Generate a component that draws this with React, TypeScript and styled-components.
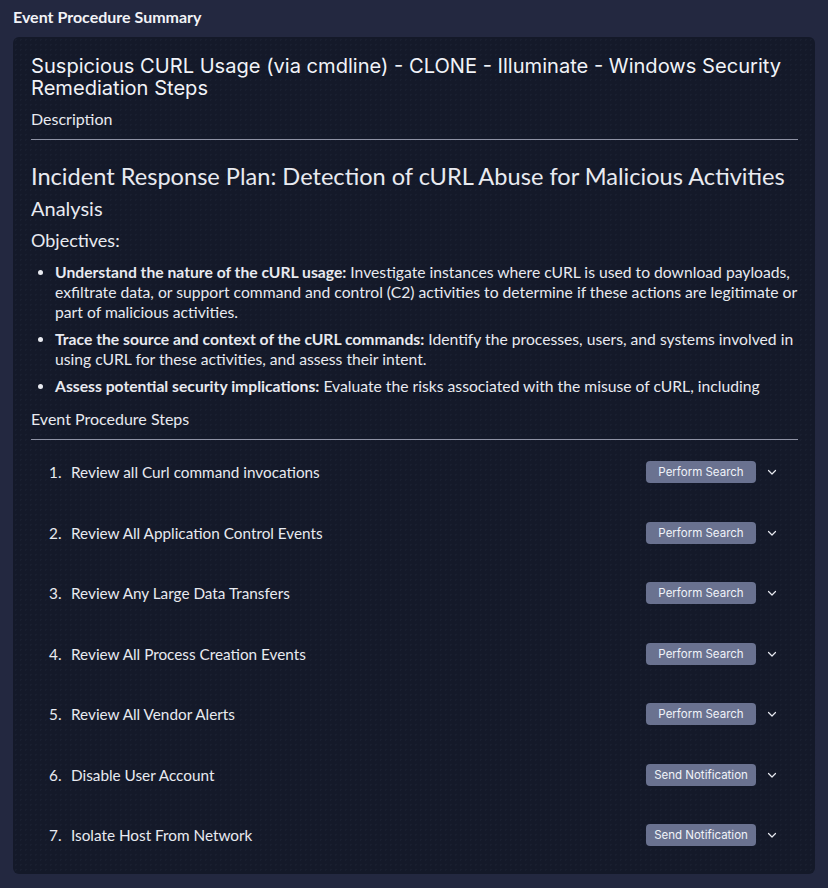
import React from 'react'
import styled, { createGlobalStyle } from 'styled-components'

const GlobalStyle = createGlobalStyle`
  html, body {
    margin: 0;
    padding: 0;
    background: #232840;
  }
  body {
    font-family: Lato, "Noto Sans", sans-serif;
    color: #e8eaf0;
  }
`

const Page = styled.div`
  width: 828px;
  height: 888px;
  box-sizing: border-box;
  padding: 7px 13px 14px 13px;
  display: flex;
  flex-direction: column;
  overflow: hidden;
`

const PanelTitle = styled.div`
  font-size: 16px;
  font-weight: 700;
  line-height: 20px;
  color: #f2f3f7;
  margin-bottom: 10px;
`

const Card = styled.div`
  width: 802px;
  flex: 1;
  box-sizing: border-box;
  background-color: #141929;
  background-image: radial-gradient(rgba(120, 130, 170, 0.05) 1px, transparent 1px);
  background-size: 5px 5px;
  border-radius: 6px;
  padding: 18px 17px 0 18px;
  display: flex;
  flex-direction: column;
`

const Title = styled.h1`
  margin: 0;
  font-family: Inter, sans-serif;
  font-weight: 400;
  font-size: 20.1px;
  line-height: 22px;
  color: #f1f3f8;
`

const SectionLabel = styled.div`
  font-size: 16px;
  line-height: 20px;
  margin-top: 10px;
  padding-bottom: 10px;
  border-bottom: 1px solid #8e92a4;
`

const Description = styled.div`
  height: 259px;
  overflow: hidden;
  padding-top: 22px;
  box-sizing: border-box;
`

const PlanHeading = styled.h2`
  margin: 0;
  font-size: 23.6px;
  font-weight: 400;
  line-height: 28px;
`

const SubHeading = styled.h3<{ $size: number }>`
  margin: 4px 0 0;
  font-size: ${p => p.$size}px;
  font-weight: 400;
  line-height: 28px;
`

const Bullets = styled.ul`
  margin: 8px 0 0;
  padding-left: 24px;
  font-size: 15.7px;
  line-height: 20px;

  li {
    margin-bottom: 7px;
  }
  b {
    font-weight: 700;
  }
`

const Steps = styled.ol`
  list-style: none;
  margin: 0;
  padding: 2px 0 0 0;
`

const Step = styled.li`
  height: 60.5px;
  display: flex;
  align-items: center;
  padding-left: 18px;
  padding-right: 20px;
  font-size: 15.3px;
`

const StepNum = styled.span`
  width: 22px;
`

const StepText = styled.span`
  flex: 1;
`

const ActionButton = styled.button`
  width: 110px;
  height: 22px;
  border: none;
  border-radius: 4px;
  background: #6a7290;
  color: #f0f2f8;
  font-family: Inter, sans-serif;
  font-size: 11.5px;
  padding: 0;
  margin-right: 10px;
`

const Chevron = () => (
  <svg width="12" height="12" viewBox="0 0 12 12" fill="none">
    <path d="M2.5 4.5 L6 8 L9.5 4.5" stroke="#e6e8ef" strokeWidth="1.2" strokeLinecap="round" strokeLinejoin="round" />
  </svg>
)

const steps = [
  { text: 'Review all Curl command invocations', action: 'Perform Search' },
  { text: 'Review All Application Control Events', action: 'Perform Search' },
  { text: 'Review Any Large Data Transfers', action: 'Perform Search' },
  { text: 'Review All Process Creation Events', action: 'Perform Search' },
  { text: 'Review All Vendor Alerts', action: 'Perform Search' },
  { text: 'Disable User Account', action: 'Send Notification' },
  { text: 'Isolate Host From Network', action: 'Send Notification' },
]

const App = () => (
  <Page>
    <GlobalStyle />
    <PanelTitle>Event Procedure Summary</PanelTitle>
    <Card>
      <Title>
        Suspicious CURL Usage (via cmdline) - CLONE - Illuminate - Windows Security Remediation Steps
      </Title>
      <SectionLabel>Description</SectionLabel>
      <Description>
        <PlanHeading>Incident Response Plan: Detection of cURL Abuse for Malicious Activities</PlanHeading>
        <SubHeading $size={20}>Analysis</SubHeading>
        <SubHeading $size={18}>Objectives:</SubHeading>
        <Bullets>
          <li>
            <b>Understand the nature of the cURL usage:</b> Investigate instances where cURL is used to download
            payloads, exfiltrate data, or support command and control (C2) activities to determine if these actions
            are legitimate or part of malicious activities.
          </li>
          <li>
            <b>Trace the source and context of the cURL commands:</b> Identify the processes, users, and systems
            involved in using cURL for these activities, and assess their intent.
          </li>
          <li>
            <b>Assess potential security implications:</b> Evaluate the risks associated with the misuse of cURL,
            including potential data loss, system compromise, and lateral movement.
          </li>
        </Bullets>
      </Description>
      <SectionLabel>Event Procedure Steps</SectionLabel>
      <Steps>
        {steps.map((s, i) => (
          <Step key={i}>
            <StepNum>{i + 1}.</StepNum>
            <StepText>{s.text}</StepText>
            <ActionButton>{s.action}</ActionButton>
            <Chevron />
          </Step>
        ))}
      </Steps>
    </Card>
  </Page>
)

export default App
